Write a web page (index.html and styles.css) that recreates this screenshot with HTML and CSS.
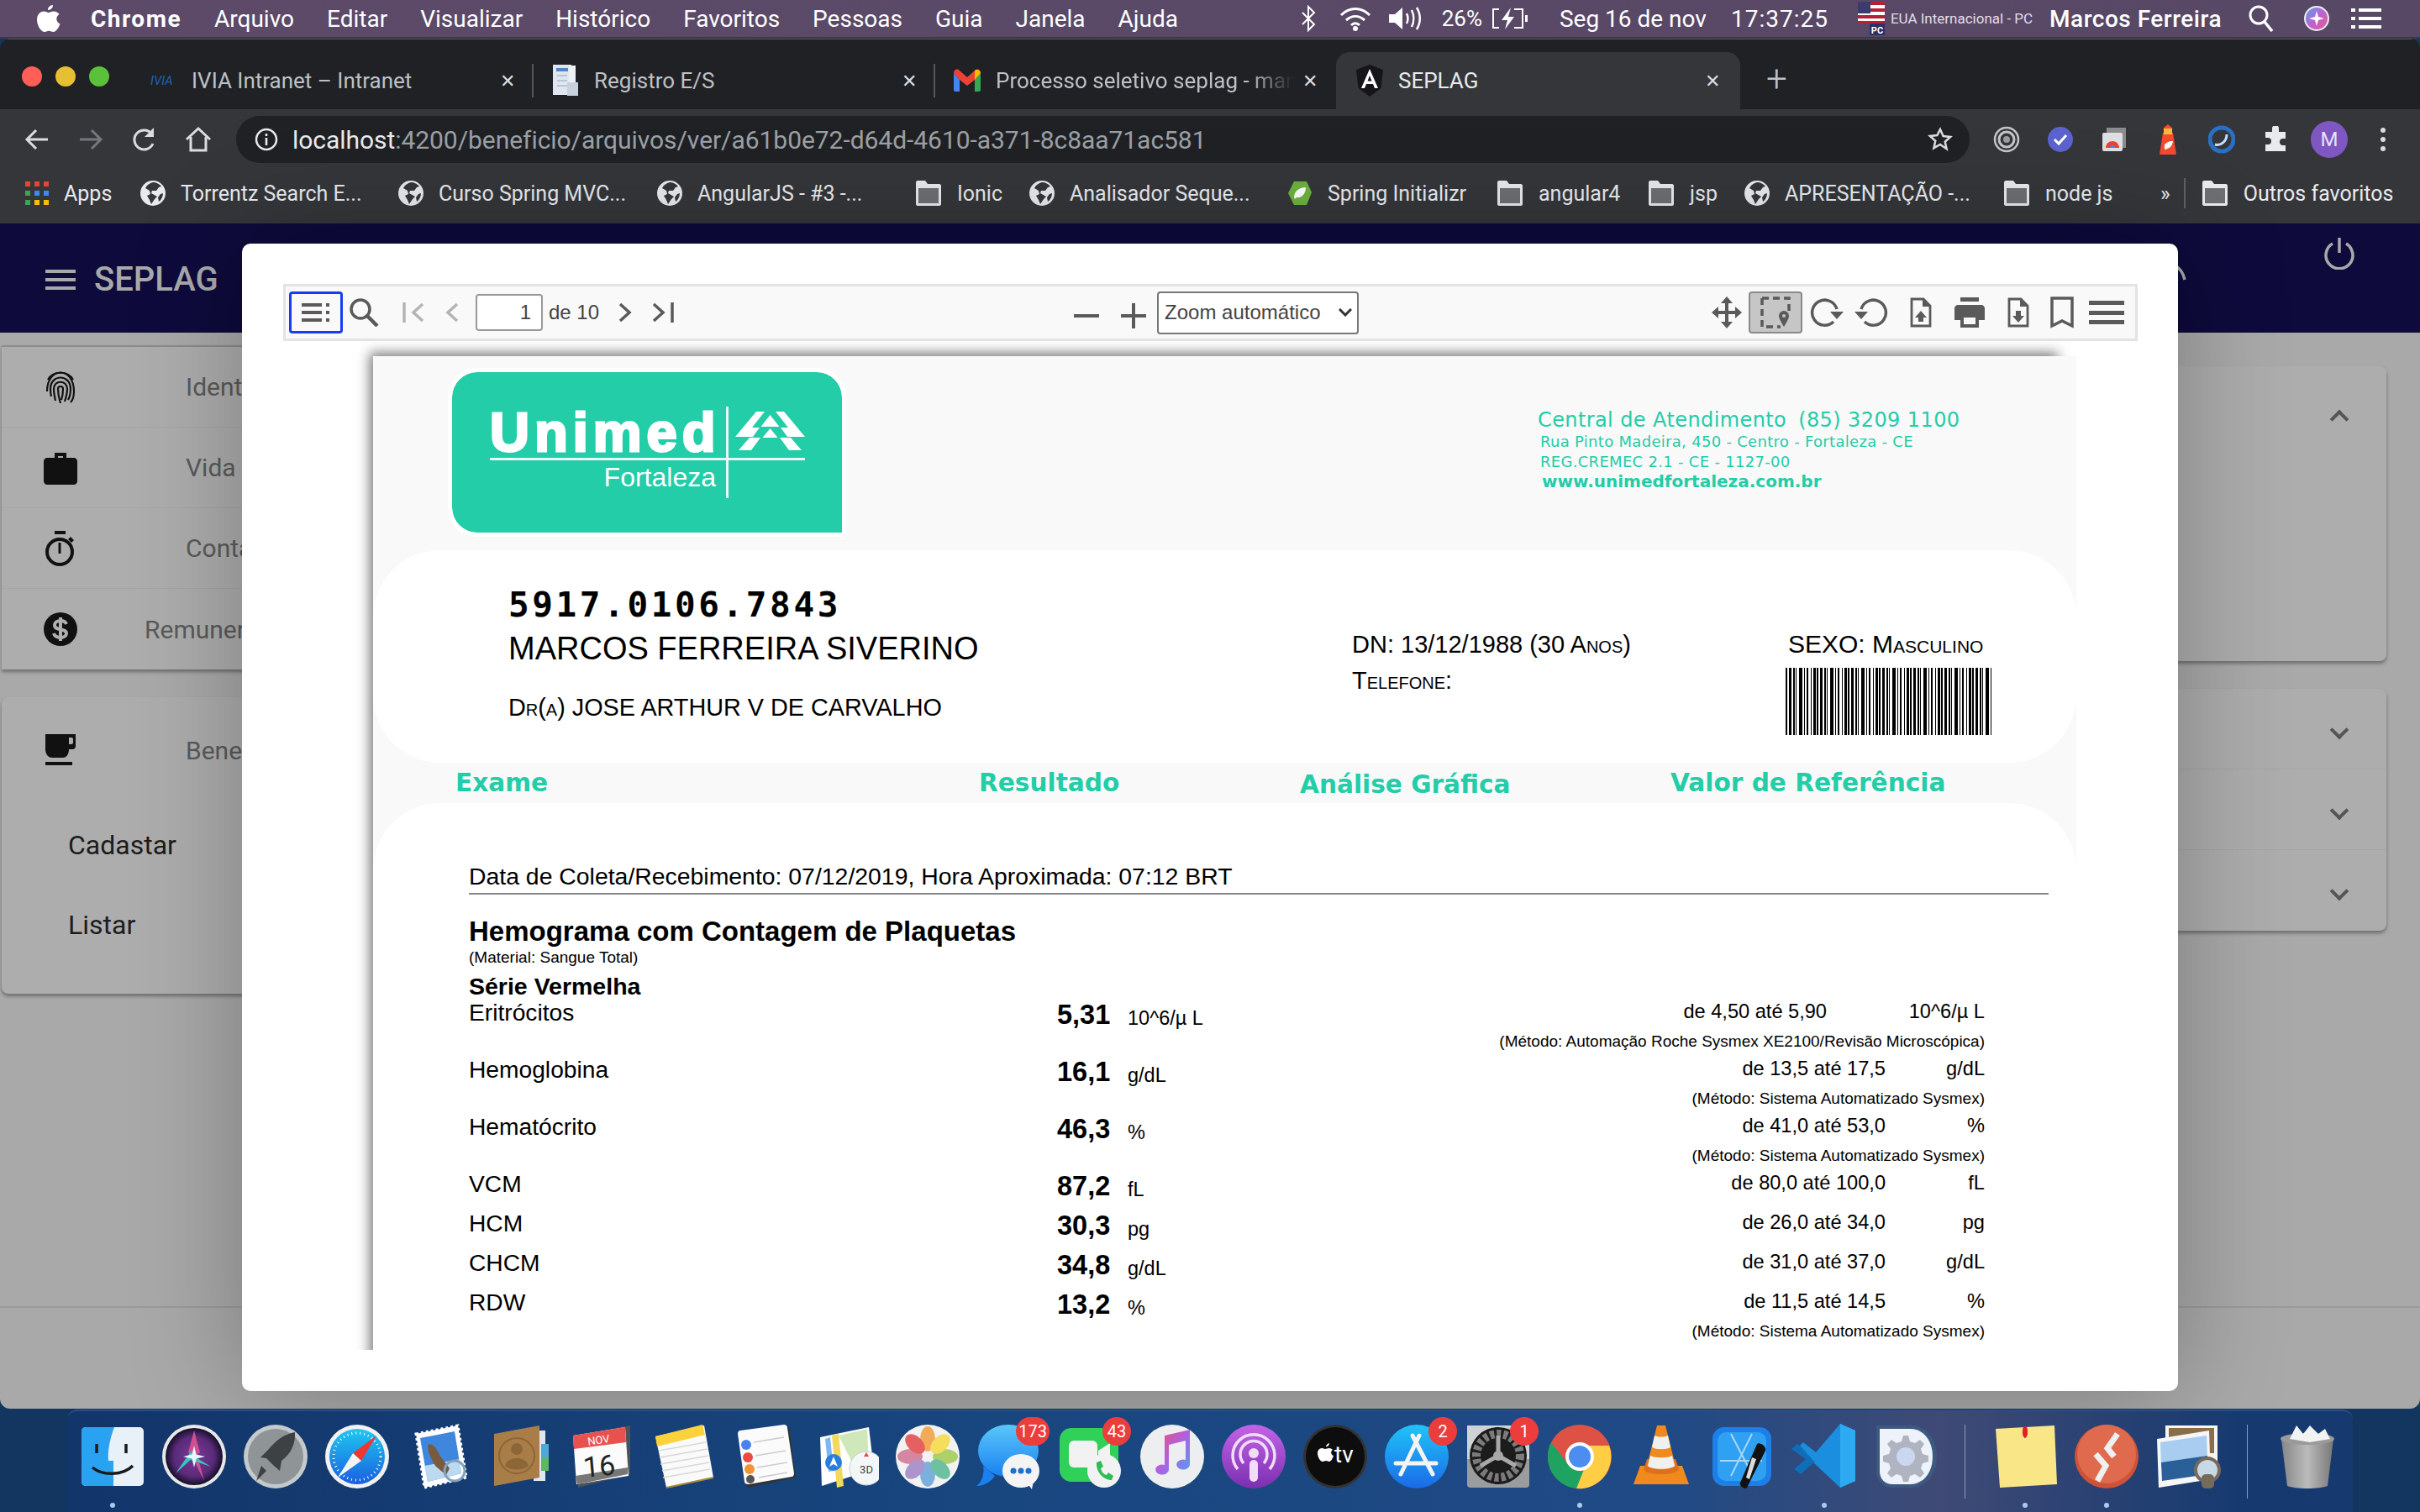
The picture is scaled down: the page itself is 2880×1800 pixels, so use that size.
FILE: index.html
```html
<!DOCTYPE html>
<html lang="pt-BR">
<head>
    <meta charset="UTF-8">
    <title>SEPLAG</title>
    <link rel="stylesheet" href="styles.css">
</head>
<body>

<!-- barra do mac -->
<div class="menubar">
    <svg class="apple" width="28" height="34" viewBox="0 0 28 34"><path fill="#fff" d="M19 1c.2 3-2.600 6.200-6 6-.4-3 2.800-6 6-6zM20 8.500c2.500 0 5 1.200 6.500 3.500-4.800 3-3.800 9.600 1 11.500-1.500 4-4.500 9.500-8 9.500-2 0-3-1.300-5.300-1.300S11 33 9 33C5 33 0 25.500 0 18.500 0 11.800 4.300 8.500 8.300 8.500c2.400 0 4 1.500 5.500 1.500 1.400 0 3.400-1.500 6.200-1.500z"/></svg>
    <span class="menu-item menu-app">Chrome</span>
    <span class="menu-item">Arquivo</span>
    <span class="menu-item">Editar</span>
    <span class="menu-item">Visualizar</span>
    <span class="menu-item">Histórico</span>
    <span class="menu-item">Favoritos</span>
    <span class="menu-item">Pessoas</span>
    <span class="menu-item">Guia</span>
    <span class="menu-item">Janela</span>
    <span class="menu-item">Ajuda</span>

    <div class="status">
        <svg class="st-bt" width="18" height="32" viewBox="0 0 18 32"><path fill="none" stroke="#fff" stroke-width="2" d="M2 9l14 14-7 7V2l7 7L2 23"/></svg>
        <svg class="st-wifi" width="38" height="30" viewBox="0 0 38 30"><g fill="none" stroke="#fff" stroke-width="3"><path d="M2 11c10-10 24-10 34 0"/><path d="M8 17c7-6 15-6 22 0"/><path d="M14 23c3-3 7-3 10 0"/></g><circle cx="19" cy="27" r="3" fill="#fff"/></svg>
        <svg class="st-vol" width="44" height="30" viewBox="0 0 44 30"><path fill="#fff" d="M1 10h7l9-8v26l-9-8H1z"/><g fill="none" stroke="#fff" stroke-width="2.500"><path d="M22 9c2 4 2 8 0 12"/><path d="M28 5c3 6 3 14 0 20"/><path d="M34 2c5 8 5 18 0 26"/></g></svg>
        <span class="st-pct">26%</span>
        <svg class="st-bat" width="44" height="28" viewBox="0 0 44 28"><path fill="none" stroke="#fff" stroke-width="2" d="M10 3H3v22h7M28 3h10v22H28"/><rect x="41" y="10" width="3" height="8" fill="#fff"/><path fill="#fff" d="M24 1L13 16h7l-3 11 11-15h-7z"/></svg>
        <span class="st-date">Seg 16 de nov</span>
        <span class="st-time">17:37:25</span>
        <svg class="st-flag" width="32" height="40" viewBox="0 0 32 40"><rect y="0" width="32" height="26" fill="#fff"/><path fill="#b22234" d="M0 0h32v4H0zM0 8h32v4H0zM0 16h32v4H0zM0 23h32v3H0z"/><rect width="15" height="14" fill="#3c3b6e"/><rect x="14" y="26" width="18" height="14" fill="#2d3068"/><text x="16" y="38" class="flag-pc">PC</text></svg>
        <span class="st-layout">EUA Internacional - PC</span>
        <span class="st-user">Marcos Ferreira</span>
        <svg class="st-search" width="30" height="32" viewBox="0 0 30 32"><circle cx="12" cy="12" r="10" fill="none" stroke="#fff" stroke-width="3"/><path stroke="#fff" stroke-width="3.500" d="M19 20l9 11"/></svg>
        <svg class="st-siri" width="30" height="30" viewBox="0 0 30 30"><defs><linearGradient id="siriMini" x1="0" y1="0" x2="1" y2="1"><stop offset="0" stop-color="#4aa8f0"/><stop offset=".5" stop-color="#c060d0"/><stop offset="1" stop-color="#e85a90"/></linearGradient></defs><circle cx="15" cy="15" r="14" fill="url(#siriMini)" stroke="#eee" stroke-width="2"/><path fill="#fff" d="M15 6l2 7 7 2-7 2-2 7-2-7-7-2 7-2z"/></svg>
        <svg class="st-list" width="36" height="24" viewBox="0 0 36 24"><path fill="#fff" d="M0 0h5v4H0zM9 0h27v4H9zM0 10h5v4H0zM9 10h27v4H9zM0 20h5v4H0zM9 20h27v4H9z"/></svg>
    </div>
</div>

<div class="window">
    <!-- abas -->
    <div class="tabstrip">
        <div class="lights"><i class="light red"></i><i class="light yellow"></i><i class="light green"></i></div>
        <div class="tab">
            <span class="fav-ivia">IVIA</span>
            <span class="tab-title">IVIA Intranet – Intranet</span>
            <span class="tab-close">✕</span>
        </div>
        <div class="tab">
            <svg class="fav" width="32" height="40" viewBox="0 0 32 40"><rect x="1" y="1" width="22" height="36" fill="#dfe6ef"/><rect x="5" y="5" width="14" height="4" fill="#4c87bf"/><path fill="#eef2f6" d="M20 2h8v36H20z"/><path fill="#b8c6d6" d="M6 13h12v2H6zM6 19h12v2H6zM6 25h12v2H6z"/><rect x="18" y="22" width="13" height="16" fill="#c8d2de"/></svg>
            <span class="tab-title">Registro E/S</span>
            <span class="tab-close">✕</span>
        </div>
        <div class="tab tab-last">
            <svg class="fav" width="32" height="28" viewBox="0 0 32 28"><path fill="#4285f4" d="M0 5v20c0 1 1 2 2 2h5V13z"/><path fill="#34a853" d="M25 13v14h5c1 0 2-1 2-2V5z"/><path fill="#ea4335" d="M7 13L0 5c0-4 4-6 7-3l9 8 9-8c3-3 7-1 7 3l-7 8-9 7z"/><path fill="#fbbc04" d="M25 2c2-2 7-1 7 3l-7 8z"/></svg>
            <span class="tab-title tab-fade">Processo seletivo seplag - mar</span>
            <span class="tab-close">✕</span>
        </div>
        <div class="tab tab-active">
            <svg class="fav" width="32" height="38" viewBox="0 0 32 38"><path fill="#15151a" d="M16 0l16 6-2.500 22L16 38 2.500 28 0 6z"/><path fill="#fff" d="M16 5L6 28h4l2-5h8l2 5h4zM13.500 19.500L16 13l2.500 6.500z"/></svg>
            <span class="tab-title">SEPLAG</span>
            <span class="tab-close">✕</span>
        </div>
        <span class="tab-new">+</span>
    </div>

    <!-- barra de endereco -->
    <div class="toolbar">
        <svg class="nav-ic" width="32" height="32" viewBox="0 0 32 32"><path fill="none" stroke="#dadce0" stroke-width="3" d="M29 16H5M15 5L4 16l11 11"/></svg>
        <svg class="nav-ic" width="32" height="32" viewBox="0 0 32 32"><path fill="none" stroke="#74777b" stroke-width="3" d="M3 16h24M17 5l11 11-11 11"/></svg>
        <svg class="nav-ic" width="32" height="32" viewBox="0 0 32 32"><path fill="none" stroke="#dadce0" stroke-width="3" d="M26 21a11.500 11.500 0 1 1-1-11"/><path fill="#dadce0" d="M27 2v11H16z"/></svg>
        <svg class="nav-ic" width="32" height="32" viewBox="0 0 32 32"><path fill="none" stroke="#dadce0" stroke-width="3" d="M2 16L16 3l14 13M7 13v16h18V13"/></svg>
        <div class="omnibox">
            <svg width="28" height="28" viewBox="0 0 28 28"><circle cx="14" cy="14" r="12" fill="none" stroke="#e8eaed" stroke-width="2.500"/><path fill="#e8eaed" d="M12.700 12h2.600v9h-2.600zM12.700 7h2.600v3h-2.600z"/></svg>
            <span class="url"><b>localhost</b>:4200/beneficio/arquivos/ver/a61b0e72-d64d-4610-a371-8c8aa71ac581</span>
            <svg class="star" width="30" height="30" viewBox="0 0 30 30"><path fill="none" stroke="#dadce0" stroke-width="2.500" d="M15 3l3.600 8 8.600.9-6.500 5.800 1.900 8.500L15 21l-7.600 4.200 1.900-8.500-6.500-5.800 8.600-.9z"/></svg>
        </div>
        <div class="extensions">
            <svg width="32" height="32" viewBox="0 0 32 32"><g fill="none" stroke="#c4c6c9"><circle cx="16" cy="16" r="14" stroke-width="2.500"/><circle cx="16" cy="16" r="9" stroke-width="3"/></g><circle cx="16" cy="16" r="4" fill="#9a9c9f"/></svg>
            <svg width="32" height="32" viewBox="0 0 32 32"><circle cx="16" cy="16" r="15" fill="#5c63cf"/><path fill="none" stroke="#fff" stroke-width="3" d="M9 16l5 5 9-10"/></svg>
            <svg width="32" height="32" viewBox="0 0 32 32"><rect x="7" y="2" width="23" height="24" fill="#8a8c8f"/><rect x="2" y="8" width="24" height="22" rx="2" fill="#dfe0e1"/><path fill="#ea4335" d="M6 26a8 8 0 0 1 16 0z"/><path fill="#4285f4" d="M11 26a3 3 0 0 1 6 0z"/></svg>
            <svg width="32" height="36" viewBox="0 0 32 36"><path fill="#f44b30" d="M10 10h12l4 26H6z"/><rect x="11" y="4" width="10" height="8" fill="#f8b83c"/><path fill="#f44b30" d="M16 0l6 5H10z"/><path fill="#fff" d="M12 24c5-5 10-4 10-4-1 6-4 9-10 10z"/></svg>
            <svg width="32" height="36" viewBox="0 0 32 36"><circle cx="16" cy="18" r="14" fill="none" stroke="#2a6fc4" stroke-width="5"/><path fill="none" stroke="#bfe0ff" stroke-width="3" d="M8 24c6 2 14-3 14-12"/></svg>
            <svg width="32" height="32" viewBox="0 0 32 32"><path fill="#e8eaed" d="M12 3a4 4 0 0 1 8 0v4h8v8h-3a4 4 0 0 0 0 8h3v7H4v-8h3a4 4 0 0 0 0-8H4V7h8z"/></svg>
            <span class="avatar">M</span>
            <svg class="kebab" width="8" height="32" viewBox="0 0 8 32"><g fill="#dadce0"><circle cx="4" cy="5" r="3"/><circle cx="4" cy="16" r="3"/><circle cx="4" cy="27" r="3"/></g></svg>
        </div>
    </div>

    <!-- favoritos -->
    <div class="bookmarks">
        <span class="bm bm-apps">
            <svg width="28" height="28" viewBox="0 0 28 28"><path fill="#ea4335" d="M0 0h6v6H0zM11 0h6v6h-6zM22 0h6v6h-6z"/><path fill="#4285f4" d="M11 11h6v6h-6zM22 11h6v6h-6z"/><path fill="#34a853" d="M0 11h6v6H0zM0 22h6v6H0z"/><path fill="#fbbc04" d="M11 22h6v6h-6zM22 22h6v6h-6z"/></svg>
            Apps
        </span>
        <span class="bm w-torrentz"><svg class="globe"><use href="#globe"/></svg>Torrentz Search E...</span>
        <span class="bm w-curso"><svg class="globe"><use href="#globe"/></svg>Curso Spring MVC...</span>
        <span class="bm w-angular"><svg class="globe"><use href="#globe"/></svg>AngularJS - #3 -...</span>
        <span class="bm w-ionic"><svg class="folder"><use href="#folder"/></svg>Ionic</span>
        <span class="bm w-analisador"><svg class="globe"><use href="#globe"/></svg>Analisador Seque...</span>
        <span class="bm w-spring"><svg class="globe" viewBox="0 0 30 30"><path fill="#6db33f" d="M8 1h15l6 13-6 15H8L1 15z"/><path fill="#fff" d="M8 20c0-8 7-12 14-12 0 8-5 13-11 12l-2 2z"/></svg>Spring Initializr</span>
        <span class="bm w-angular4"><svg class="folder"><use href="#folder"/></svg>angular4</span>
        <span class="bm w-jsp"><svg class="folder"><use href="#folder"/></svg>jsp</span>
        <span class="bm w-apres"><svg class="globe"><use href="#globe"/></svg>APRESENTAÇÃO -...</span>
        <span class="bm w-node"><svg class="folder"><use href="#folder"/></svg>node js</span>
        <span class="bm-more">»</span>
        <span class="bm-sep"></span>
        <span class="bm"><svg class="folder"><use href="#folder"/></svg>Outros favoritos</span>
    </div>

    <svg class="sprites" width="0" height="0">
        <symbol id="globe" viewBox="0 0 30 30"><circle cx="15" cy="15" r="15" fill="#e8eaed"/><path fill="#35363a" d="M15 2c-4 1-7 3-9 7l5 3 1 4-4 2 3 5 2 5 4-6 3-3-7-4 1-3 5 0 3-4 3-1c-2-3-6-5-10-5zM24 16l-3 4 1 5c3-2 5-6 5-10z"/></symbol>
        <symbol id="folder" viewBox="0 0 32 30"><path fill="#e8eaed" d="M1 2c0-1 1-2 2-2h9l3 4h14c1 0 2 1 2 2v22c0 1-1 2-2 2H3c-1 0-2-1-2-2z"/><rect x="4" y="9" width="24" height="18" fill="#6e6f72"/></symbol>
    </svg>

    <!-- aplicacao por tras do modal -->
    <div class="app">
        <header class="app-header">
            <svg class="burger" width="36" height="24" viewBox="0 0 36 24"><path fill="#a9a9a9" d="M0 0h36v4H0zM0 10h36v4H0zM0 20h36v4H0z"/></svg>
            <span class="brand">SEPLAG</span>
            <svg class="acct" width="50" height="40" viewBox="0 0 50 40"><path fill="none" stroke="#a9a9a9" stroke-width="3.500" d="M10 4c14-3 26 1 30 18"/></svg>
            <svg class="power" width="36" height="40" viewBox="0 0 36 40"><path fill="none" stroke="#a9a9a9" stroke-width="3.500" d="M10 9a16 16 0 1 0 16 0M18 2v18"/></svg>
        </header>
        <div class="app-body">
            <nav class="sidenav">
                <div class="nav-card">
                    <div class="nav-row">
                        <svg class="nav-icon" width="36" height="42" viewBox="0 0 36 42"><g fill="none" stroke="#111" stroke-width="2.200"><path d="M3 12c6-11 24-11 30 0"/><path d="M2 26c0-30 32-30 32 0 0 6-1 10-4 13"/><path d="M7 32c-1-4-1-7-1-9 0-18 24-18 24 0 0 6-1 10-3 13"/><path d="M12 37c-1-5-2-9-2-14 0-11 16-11 16 0 0 5-1 9-3 15"/><path d="M18 40c-2-6-3-12-3-17 0-4 6-4 6 0 0 6-1 10-2 13"/></g></svg>
                        <span class="nav-label">Identificação</span>
                    </div>
                    <div class="nav-row">
                        <svg class="nav-icon" width="40" height="40" viewBox="0 0 40 40"><path fill="#111" d="M13 8V2h14v6h9c2 0 4 2 4 4v24c0 2-2 4-4 4H4c-2 0-4-2-4-4V12c0-2 2-4 4-4zm4-2v2h6V6z"/></svg>
                        <span class="nav-label">Vida funcional</span>
                    </div>
                    <div class="nav-row">
                        <svg class="nav-icon" width="38" height="42" viewBox="0 0 38 42"><circle cx="18" cy="25" r="15" fill="none" stroke="#111" stroke-width="4"/><path fill="#111" d="M12 0h13v4H12zM16.500 14h3v13h-3zM31 7l4 4-3 3-4-4z"/></svg>
                        <span class="nav-label">Contato</span>
                    </div>
                    <div class="nav-row">
                        <svg class="nav-icon" width="40" height="40" viewBox="0 0 40 40"><circle cx="20" cy="20" r="20" fill="#111"/><path fill="none" stroke="#b0b0b0" stroke-width="4" d="M27 14c-1-3-4-4-7-4-4 0-7 2-7 5 0 8 14 3 14 10 0 3-3 5-7 5-3 0-7-1-8-5M20 6v28"/></svg>
                        <span class="nav-label nav-label-long">Remuneração</span>
                    </div>
                </div>
                <div class="nav-card nav-card-open">
                    <div class="nav-row">
                        <svg class="nav-icon" width="36" height="38" viewBox="0 0 36 38"><path fill="#111" d="M0 0h36v14a4 4 0 0 1-4 4h-4c0 6-3 10-7 10H8c-5 0-8-5-8-10zM28 4v8h3a2 2 0 0 0 2-2V6a2 2 0 0 0-2-2zM0 33h32v4H0z"/></svg>
                        <span class="nav-label">Benefícios</span>
                    </div>
                    <a class="nav-sub">Cadastar</a>
                    <a class="nav-sub">Listar</a>
                </div>
            </nav>
            <section class="panels">
                <div class="panel panel-open"><i class="chev chev-up"></i></div>
                <div class="panel-group">
                    <div class="panel-line"><i class="chev"></i></div>
                    <div class="panel-line"><i class="chev"></i></div>
                    <div class="panel-line"><i class="chev"></i></div>
                </div>
            </section>
        </div>
        <div class="app-footer"></div>

        <!-- modal com o visualizador pdf -->
        <div class="modal">
            <div class="viewer-bar">
                <button class="pdf-btn pdf-toggle">
                    <svg width="34" height="22" viewBox="0 0 34 22"><path fill="#5a5a5a" d="M0 0h24v4H0zM0 9h24v4H0zM0 18h24v4H0zM29 0h4v4h-4zM29 9h4v4h-4zM29 18h4v4h-4z"/></svg>
                </button>
                <svg class="pdf-search" width="36" height="34" viewBox="0 0 36 34"><circle cx="14" cy="13" r="11" fill="none" stroke="#5a5a5a" stroke-width="3.500"/><path stroke="#5a5a5a" stroke-width="4.500" d="M22 21l12 12"/></svg>
                <svg class="pdf-first" width="26" height="24" viewBox="0 0 26 24"><path fill="none" stroke="#b4b4b4" stroke-width="3.500" d="M2 0v24M24 2L13 12l11 10"/></svg>
                <svg class="pdf-prev" width="16" height="24" viewBox="0 0 16 24"><path fill="none" stroke="#b4b4b4" stroke-width="3.500" d="M14 2L3 12l11 10"/></svg>
                <input class="pdf-page" value="1">
                <span class="pdf-of">de 10</span>
                <svg class="pdf-next" width="16" height="24" viewBox="0 0 16 24"><path fill="none" stroke="#5a5a5a" stroke-width="3.500" d="M2 2l11 10L2 22"/></svg>
                <svg class="pdf-last" width="26" height="24" viewBox="0 0 26 24"><path fill="none" stroke="#5a5a5a" stroke-width="3.500" d="M2 2l11 10L2 22M24 0v24"/></svg>
                <svg class="pdf-minus" width="30" height="4" viewBox="0 0 30 4"><rect width="30" height="4" fill="#5a5a5a"/></svg>
                <svg class="pdf-plus" width="30" height="30" viewBox="0 0 30 30"><path fill="#5a5a5a" d="M0 13h30v4H0zM13 0h4v30h-4z"/></svg>
                <span class="pdf-zoom">Zoom automático<svg width="16" height="10" viewBox="0 0 16 10"><path fill="none" stroke="#333" stroke-width="3" d="M1 1l7 7 7-7"/></svg></span>
                <svg class="pdf-move" width="36" height="38" viewBox="0 0 36 38"><path fill="#5a5a5a" d="M18 0l7 8h-5v9h8v-5l8 7-8 7v-5h-8v9h5l-7 8-7-8h5v-9H8v5l-8-7 8-7v5h8V8h-5z"/></svg>
                <button class="pdf-btn pdf-select">
                    <svg width="36" height="38" viewBox="0 0 36 38"><path fill="none" stroke="#5a5a5a" stroke-width="3.500" stroke-dasharray="8 5" d="M2 2h32v16M2 2v34h22"/><path fill="#5a5a5a" d="M28 17a6 6 0 0 1 6 6c0 4-6 13-6 13s-6-9-6-13a6 6 0 0 1 6-6z"/><circle cx="28" cy="23" r="2" fill="#c6c6c6"/></svg>
                </button>
                <svg class="pdf-rot" width="40" height="36" viewBox="0 0 40 36"><path fill="none" stroke="#5a5a5a" stroke-width="3.500" d="M32 14A15 15 0 1 0 28 29"/><path fill="#5a5a5a" d="M24 17h16l-8 9z"/></svg>
                <svg class="pdf-rotb" width="40" height="36" viewBox="0 0 40 36"><path fill="none" stroke="#5a5a5a" stroke-width="3.500" d="M8 14A15 15 0 1 1 12 29"/><path fill="#5a5a5a" d="M0 17h16l-8 9z"/></svg>
                <svg class="pdf-open" width="26" height="36" viewBox="0 0 26 36"><path fill="none" stroke="#5a5a5a" stroke-width="2.800" d="M2 2h14l8 8v24H2z"/><path fill="#5a5a5a" d="M15 2l9 9h-9zM13 16l7 8h-4v5h-6v-5H6z"/></svg>
                <svg class="pdf-print" width="36" height="36" viewBox="0 0 36 36"><path fill="#5a5a5a" d="M7 0h22v5H7zM4 9h28c2 0 4 2 4 4v14h-7v9H7v-9H0V13c0-2 2-4 4-4zm7 15v8h14v-8z"/></svg>
                <svg class="pdf-save" width="26" height="36" viewBox="0 0 26 36"><path fill="none" stroke="#5a5a5a" stroke-width="2.800" d="M2 2h14l8 8v24H2z"/><path fill="#5a5a5a" d="M15 2l9 9h-9zM10 16h6v6h4l-7 8-7-8h4z"/></svg>
                <svg class="pdf-mark" width="28" height="38" viewBox="0 0 28 38"><path fill="none" stroke="#5a5a5a" stroke-width="3.500" d="M2 2h24v33l-12-6-12 6z"/></svg>
                <svg class="pdf-more" width="42" height="28" viewBox="0 0 42 28"><path fill="#5a5a5a" d="M0 0h42v5H0zM0 12h42v5H0zM0 23h42v5H0z"/></svg>
            </div>

            <div class="viewer">
                <div class="sheet">
                    <div class="scan">
                        <div class="lab-head">
                            <div class="logo">
                                <div class="logo-top">
                                    <span class="logo-name">Unimed</span>
                                    <svg class="logo-mark" width="83" height="46" viewBox="0 0 83 46"><g fill="#fff"><path d="M0 30L25 0h10L20 19h9l-8 11z"/><path d="M83 30L58 0H48l15 19h-9l8 11z"/><path d="M41.500 4l11 14h-22zM4 46l13-15h13L19 46zM79 46L66 31H53l11 15z"/><path d="M41.500 20l9 11h-18z"/></g></svg>
                                </div>
                                <div class="logo-city">Fortaleza</div>
                                <i class="logo-vline"></i>
                            </div>
                            <div class="lab-contact">
                                <div class="contact-main"><span>Central de Atendimento</span><span class="contact-phone">(85) 3209 1100</span></div>
                                <div class="contact-small">Rua Pinto Madeira, 450 - Centro - Fortaleza - CE</div>
                                <div class="contact-small">REG.CREMEC 2.1 - CE - 1127-00</div>
                                <div class="contact-web">www.unimedfortaleza.com.br</div>
                            </div>
                        </div>

                        <div class="patient">
                            <div class="patient-main">
                                <div class="patient-code">5917.0106.7843</div>
                                <div class="patient-name">MARCOS FERREIRA SIVERINO</div>
                                <div class="patient-doctor">Dr(a) JOSE ARTHUR V DE CARVALHO</div>
                            </div>
                            <div class="patient-info">
                                <div>DN: 13/12/1988 (30 Anos)</div>
                                <div class="patient-phone">Telefone:</div>
                            </div>
                            <div class="patient-sex">
                                <div>SEXO: Masculino</div>
                                <div class="barcode"></div>
                            </div>
                        </div>

                        <div class="col-heads">
                            <span class="col-exam">Exame</span>
                            <span class="col-result">Resultado</span>
                            <span class="col-graph">Análise Gráfica</span>
                            <span class="col-ref">Valor de Referência</span>
                        </div>

                        <div class="results">
                            <div class="collect">Data de Coleta/Recebimento: 07/12/2019, Hora Aproximada: 07:12 BRT</div>
                            <h3 class="exam-title">Hemograma com Contagem de Plaquetas</h3>
                            <div class="exam-material">(Material: Sangue Total)</div>
                            <div class="exam-group">Série Vermelha</div>

                            <div class="exam-row exam-first">
                                <span>Eritrócitos</span><b>5,31</b><small>10^6/µ L</small>
                                <span class="ref">de 4,50 até 5,90</span><span class="ref-unit">10^6/µ L</span>
                                <em>(Método: Automação Roche Sysmex XE2100/Revisão Microscópica)</em>
                            </div>
                            <div class="exam-row">
                                <span>Hemoglobina</span><b>16,1</b><small>g/dL</small>
                                <span class="ref">de 13,5 até 17,5</span><span class="ref-unit">g/dL</span>
                                <em>(Método: Sistema Automatizado Sysmex)</em>
                            </div>
                            <div class="exam-row">
                                <span>Hematócrito</span><b>46,3</b><small>%</small>
                                <span class="ref">de 41,0 até 53,0</span><span class="ref-unit">%</span>
                                <em>(Método: Sistema Automatizado Sysmex)</em>
                            </div>
                            <div class="exam-row">
                                <span>VCM</span><b>87,2</b><small>fL</small>
                                <span class="ref">de 80,0 até 100,0</span><span class="ref-unit">fL</span>
                            </div>
                            <div class="exam-row">
                                <span>HCM</span><b>30,3</b><small>pg</small>
                                <span class="ref">de 26,0 até 34,0</span><span class="ref-unit">pg</span>
                            </div>
                            <div class="exam-row">
                                <span>CHCM</span><b>34,8</b><small>g/dL</small>
                                <span class="ref">de 31,0 até 37,0</span><span class="ref-unit">g/dL</span>
                            </div>
                            <div class="exam-row">
                                <span>RDW</span><b>13,2</b><small>%</small>
                                <span class="ref">de 11,5 até 14,5</span><span class="ref-unit">%</span>
                                <em>(Método: Sistema Automatizado Sysmex)</em>
                            </div>
                        </div>
                    </div>
                </div>
            </div>
        </div>
    </div>
</div>

<!-- dock -->
<div class="dock">
    <div class="dock-item has-dot">
        <svg viewBox="0 0 78 78"><rect x="2" y="4" width="74" height="70" rx="5" fill="#e8f1f8"/><path fill="#2aa2f2" d="M7 4h34c-6 16-8 30-7 40h6v30H7a5 5 0 0 1-5-5V9a5 5 0 0 1 5-5z"/><g stroke="#1b1b1b" stroke-width="3.500" fill="none"><path d="M20 24v11M55 24v11"/><path d="M15 52c12 10 36 10 48-2"/></g></svg>
    </div>
    <div class="dock-item">
        <svg viewBox="0 0 78 78"><defs><radialGradient id="siriBg"><stop offset="0" stop-color="#7a3a9a"/><stop offset=".7" stop-color="#5a2a78"/><stop offset="1" stop-color="#14102a"/></radialGradient></defs><circle cx="39" cy="39" r="38" fill="#e8e8e8"/><circle cx="39" cy="39" r="34" fill="url(#siriBg)"/><path fill="#d0508e" d="M39 8l7 26-7 5-7-5zM44 42l7 26-12-24z"/><path fill="#38c8c0" d="M39 39l-22 20 18-26zM39 39l20 12-24-8z"/><path fill="#e4f9ff" d="M39 26l2.500 10.500L52 39l-10.500 2.500L39 52l-2.500-10.500L26 39l10.500-2.500z"/></svg>
    </div>
    <div class="dock-item">
        <svg viewBox="0 0 78 78"><circle cx="39" cy="39" r="38" fill="#c4cacb"/><circle cx="39" cy="39" r="33" fill="#8f9496"/><path fill="#3e4143" d="M62 10c1 14-5 26-16 34l-2 12-7-6-9-9-7-1 9-9c10-12 20-19 32-21zM22 50l6 6-12 12z"/></svg>
    </div>
    <div class="dock-item">
        <svg viewBox="0 0 78 78"><defs><linearGradient id="safBg" x1="0" y1="0" x2="0" y2="1"><stop offset="0" stop-color="#1ec8f0"/><stop offset="1" stop-color="#1a5fe0"/></linearGradient></defs><circle cx="39" cy="39" r="38" fill="#f2f2f2"/><circle cx="39" cy="39" r="33" fill="url(#safBg)"/><circle cx="39" cy="39" r="28" fill="none" stroke="#fff" stroke-width="3" stroke-dasharray="1 4"/><path fill="#f0372e" d="M62 14L34 35l10 9z"/><path fill="#f4f4f4" d="M16 64l28-20-10-9z"/></svg>
    </div>
    <div class="dock-item">
        <svg viewBox="0 0 78 78"><path fill="#fff" stroke="#fff" stroke-width="3" stroke-dasharray="3 3" d="M12 12l50-10 10 62-50 12z"/><path fill="#3f87dd" d="M17 17l41-8 8 50-40 10z"/><path fill="#bcd9f2" d="M22 50l42-8 2 17-40 10z"/><path fill="#7a5a3e" d="M26 25c6-2 10 3 14 12l12 16-4 8-12-10c-6-8-10-18-10-26z"/><circle cx="58" cy="56" r="12" fill="none" stroke="#85a0bd" stroke-width="3"/></svg>
    </div>
    <div class="dock-item">
        <svg viewBox="0 0 78 78"><rect x="55" y="8" width="14" height="60" fill="#dfe6ee"/><rect x="64" y="24" width="9" height="16" fill="#4fa8d8"/><rect x="64" y="40" width="9" height="16" fill="#5cb865"/><path fill="#a97d47" d="M8 12L62 2v62L8 74z"/><circle cx="35" cy="38" r="21" fill="none" stroke="#8c6636" stroke-width="2"/><circle cx="35" cy="30" r="7" fill="#8c6636"/><path fill="#8c6636" d="M21 50c3-12 25-12 28 0-7 6-21 6-28 0z"/></svg>
    </div>
    <div class="dock-item">
        <svg viewBox="0 0 78 78"><path fill="#4b5259" d="M7 14l66-12v58L11 76z"/><path fill="#fbfbfb" d="M5 14l62-10 4 58-62 10z"/><path fill="#e8514e" d="M5 14l62-10 1 18L6 30z"/><path fill="#777" d="M8 62l62-10v8L10 72z"/><text x="36" y="24" class="cal-month" transform="rotate(-8 36 24)">NOV</text><text x="37" y="62" class="cal-day" transform="rotate(-5 37 62)">16</text></svg>
    </div>
    <div class="dock-item">
        <svg viewBox="0 0 78 78"><path fill="#fafafa" d="M6 15L64 2l11 62-56 12z"/><path fill="#fbd13c" d="M6 15L62 1l3 12L8 27z"/><g stroke="#d8d8d8" stroke-width="1.500"><path d="M10 32l56-10M11 40l57-10M12 48l57-10M14 56l56-10M15 64l56-10"/></g><path stroke="#a58a3a" stroke-width="2" d="M19 76l56-12"/></svg>
    </div>
    <div class="dock-item">
        <svg viewBox="0 0 78 78"><path fill="#333" d="M12 12l56-8 8 60-58 12z"/><path fill="#fbfbfb" d="M10 8L62 1c2 0 4 1 4 4l8 54c0 2-1 4-3 4L20 72c-3 0-5-1-5-3L7 12c0-2 1-4 3-4z"/><circle cx="17" cy="25" r="6" fill="#4a80f0"/><circle cx="19" cy="40" r="6" fill="#ec4b43"/><circle cx="21" cy="54" r="6" fill="#f09535"/><circle cx="22" cy="66" r="5" fill="#555"/><g stroke="#ccc" stroke-width="1.500"><path d="M26 22l36-6M28 38l36-6M30 52l36-6M32 64l34-6"/></g></svg>
    </div>
    <div class="dock-item">
        <svg viewBox="0 0 78 78"><path fill="#fff" d="M8 16l58-12 6 50-62 20z"/><path fill="#cfe8b9" d="M30 14l34-8 2 44-20-4z"/><path fill="#f4d85a" d="M22 14l8-2 6 62-8 2z"/><path fill="#7fb8ee" d="M14 18l6-2 4 40-6 1z"/><circle cx="24" cy="46" r="10" fill="#2a7de0"/><path fill="#fff" d="M24 39l5 12-5-3-5 3z"/><circle cx="63" cy="53" r="20" fill="#f4f7f8" stroke="#c7ced2"/><text x="63" y="59" class="maps-3d">3D</text><path fill="#e8483f" d="M63 34l3 5h-6z"/></svg>
    </div>
    <div class="dock-item">
        <svg viewBox="0 0 78 78"><circle cx="39" cy="39" r="38" fill="#f2f2f2"/><g opacity=".8"><ellipse cx="39" cy="18" rx="9" ry="15" fill="#f39b33"/><ellipse cx="39" cy="60" rx="9" ry="15" fill="#5e9fd8"/><ellipse cx="18" cy="39" rx="15" ry="9" fill="#cf6d8f"/><ellipse cx="60" cy="39" rx="15" ry="9" fill="#9ec84a"/><ellipse cx="24" cy="24" rx="14" ry="9" fill="#e33d3d" transform="rotate(45 24 24)"/><ellipse cx="54" cy="24" rx="14" ry="9" fill="#f6d83a" transform="rotate(-45 54 24)"/><ellipse cx="24" cy="54" rx="14" ry="9" fill="#9b7fc4" transform="rotate(-45 24 54)"/><ellipse cx="54" cy="54" rx="14" ry="9" fill="#4cb58d" transform="rotate(45 54 54)"/></g></svg>
    </div>
    <div class="dock-item">
        <svg viewBox="0 0 78 78"><defs><linearGradient id="msgBg" x1="0" y1="0" x2="0" y2="1"><stop offset="0" stop-color="#5ac8fa"/><stop offset="1" stop-color="#1a80f0"/></linearGradient></defs><ellipse cx="38" cy="32" rx="36" ry="31" fill="url(#msgBg)"/><path fill="#1a80f0" d="M8 50c2 10-2 20-8 24 10 0 18-6 22-12z"/><ellipse cx="53" cy="56" rx="22" ry="20" fill="#f4f4f4"/><path fill="#f4f4f4" d="M60 70l6 8 2-10z"/><g fill="#1a6fd0"><circle cx="44" cy="56" r="3.500"/><circle cx="53" cy="56" r="3.500"/><circle cx="62" cy="56" r="3.500"/></g></svg>
        <span class="badge badge-wide">173</span>
    </div>
    <div class="dock-item">
        <svg viewBox="0 0 78 78"><rect x="2" y="5" width="70" height="64" rx="14" fill="#30d158"/><rect x="13" y="20" width="34" height="32" rx="6" fill="#f2f2f2"/><path fill="#f2f2f2" d="M48 32l14-9v26l-14-9z"/><circle cx="55" cy="56" r="20" fill="#f2f2f2"/><path fill="#2ebd55" d="M46 46l5-2 3 7-3 2c1 4 3 7 7 8l2-3 6 4-2 5c-10 0-19-10-18-21z"/></svg>
        <span class="badge">43</span>
    </div>
    <div class="dock-item">
        <svg viewBox="0 0 78 78"><defs><linearGradient id="musBg" x1="0" y1="0" x2="1" y2="1"><stop offset="0" stop-color="#f0506e"/><stop offset=".5" stop-color="#b060e0"/><stop offset="1" stop-color="#50a0f0"/></linearGradient></defs><circle cx="39" cy="39" r="38" fill="#eceef0"/><path fill="url(#musBg)" d="M30 14l30-7v42a8 6 0 1 1-5-6V20l-20 5v30a8 6 0 1 1-5-6z"/></svg>
    </div>
    <div class="dock-item">
        <svg viewBox="0 0 78 78"><defs><linearGradient id="podBg" x1="0" y1="0" x2="0" y2="1"><stop offset="0" stop-color="#c264e8"/><stop offset="1" stop-color="#7c2fb0"/></linearGradient></defs><circle cx="39" cy="39" r="38" fill="url(#podBg)"/><g fill="none" stroke="#f2ddf8" stroke-width="3.500"><path d="M20 54a25 25 0 1 1 38 0"/><path d="M27 47a16 16 0 1 1 24 0"/></g><circle cx="39" cy="35" r="6" fill="#f2ddf8"/><rect x="34" y="43" width="10" height="26" rx="5" fill="#f2ddf8"/></svg>
    </div>
    <div class="dock-item">
        <svg viewBox="0 0 78 78"><circle cx="39" cy="39" r="38" fill="#333"/><circle cx="39" cy="39" r="35" fill="#0d0d0d"/><path fill="#fff" d="M28 27c1-3 3-4 4-4 0 2-2 5-4 4zM32 29c2 0 3 1 4 2-3 2-2 6 1 7-1 3-3 7-5 7-2 0-2-1-4-1s-2 1-4 1c-3 0-6-6-6-10 0-4 3-6 5-6s3 1 4 1 3-1 5-1z"/><text x="38" y="46" class="tv-text">tv</text></svg>
    </div>
    <div class="dock-item">
        <svg viewBox="0 0 78 78"><defs><linearGradient id="appBg" x1="0" y1="0" x2="0" y2="1"><stop offset="0" stop-color="#20c4f8"/><stop offset="1" stop-color="#1a6ae8"/></linearGradient></defs><circle cx="39" cy="39" r="38" fill="url(#appBg)"/><g stroke="#f4f4f4" stroke-width="5" stroke-linecap="round"><path d="M42 14L20 60M34 14l24 46M14 47h48"/></g></svg>
        <span class="badge">2</span>
    </div>
    <div class="dock-item">
        <svg viewBox="0 0 78 78"><rect x="2" y="2" width="74" height="74" rx="4" fill="#9a9c9e"/><rect x="2" y="2" width="74" height="40" fill="#cfd3d6"/><circle cx="39" cy="38" r="34" fill="#1c1c1c"/><circle cx="39" cy="38" r="26" fill="none" stroke="#7b7b7b" stroke-width="10" stroke-dasharray="5 3"/><g stroke="#a8a8a8" stroke-width="5"><path d="M39 38V14M39 38L18 50M39 38l21 12"/></g><circle cx="39" cy="38" r="6" fill="#a8a8a8"/></svg>
        <span class="badge">1</span>
    </div>
    <div class="dock-item has-dot">
        <svg viewBox="0 0 78 78"><circle cx="39" cy="39" r="38" fill="#de5246"/><path fill="#1ea362" d="M5 22a38 38 0 0 0 30 55l14-23-10 3-14-9z"/><path fill="#ffce44" d="M74 26H39l12 11-16 40a38 38 0 0 0 39-51z"/><circle cx="39" cy="39" r="17" fill="#fff"/><circle cx="39" cy="39" r="13" fill="#4d8df0"/></svg>
    </div>
    <div class="dock-item">
        <svg viewBox="0 0 78 78"><path fill="#f08a1d" d="M6 72L14 50h50l8 22z"/><path fill="#dd6f1d" d="M18 54c4 8 38 8 42 0l-4-12H22z"/><path fill="#f08a1d" d="M34 2h10l12 48c-6 6-28 6-34 0z"/><path fill="#f0f0f0" d="M31 14c4 2 12 2 16 0l3 14c-5 3-17 3-22 0zM26 38c6 3 20 3 26 0l3 12c-5 5-27 5-32 0z"/></svg>
    </div>
    <div class="dock-item">
        <svg viewBox="0 0 78 78"><rect x="3" y="4" width="70" height="70" rx="14" fill="#1d7fe8"/><rect x="9" y="10" width="58" height="58" rx="10" fill="#2fa0f2"/><g stroke="#a6d8fb" stroke-width="2"><path d="M25 12l26 50M50 12L25 62M12 44h50"/></g><path fill="#111" d="M56 24c3-3 12 3 10 8L44 76c-2 3-10-2-8-6z"/><path fill="#ddd" d="M50 40l5 2-8 24-4-2z"/></svg>
    </div>
    <div class="dock-item has-dot">
        <svg viewBox="0 0 78 78"><path fill="#0e6fb8" d="M0 30l7-6 22 20-18 16-8-6 14-12z"/><path fill="#1b8ee0" d="M58 0L29 34 14 22l-4 4 18 20-2 0 32 30 18-8V8z"/><path fill="#2cabf2" d="M58 0l18 8v60l-18 8z"/></svg>
    </div>
    <div class="dock-item">
        <svg viewBox="0 0 78 78"><path fill="#3c5a80" d="M4 2h40c20 0 32 16 32 37S64 76 44 76H24C12 76 4 68 4 56z"/><path fill="#eef3fb" d="M8 6h36c16 0 27 14 27 33S60 72 44 72H24C14 72 8 66 8 56z"/><path fill="#b0b3c0" d="M36 14l6 0 2 7 6 2 6-4 5 5-4 6 2 6 7 2v7l-7 2-2 6 4 6-5 5-6-4-6 2-2 7h-6l-2-7-6-2-6 4-5-5 4-6-2-6-7-2v-7l7-2 2-6-4-6 5-5 6 4 6-2z"/><circle cx="39" cy="39" r="11" fill="#cbd7f0"/></svg>
    </div>
    <i class="dock-sep"></i>
    <div class="dock-item has-dot">
        <svg viewBox="0 0 78 78"><path fill="#f8e687" d="M4 6l70-4 3 70-68 4z"/><path fill="#e01f26" d="M39 3c3 0 3 4 3 8 0 3-2 6-3 6s-3-3-3-6c0-4 0-8 3-8z"/></svg>
    </div>
    <div class="dock-item has-dot">
        <svg viewBox="0 0 78 78"><circle cx="39" cy="39" r="38" fill="#cf5238"/><circle cx="39" cy="36" r="35" fill="#e06a4e"/><path fill="none" stroke="#f0f0f0" stroke-width="7" d="M52 12L40 29l8 10M26 36l12 14-10 18"/></svg>
    </div>
    <div class="dock-item">
        <svg viewBox="0 0 78 78"><rect x="12" y="2" width="62" height="50" fill="#f6f6f6"/><rect x="16" y="5" width="54" height="30" fill="#8a6e4a"/><path fill="#f6f6f6" d="M2 18l62-10 2 58-62 10z"/><path fill="#a9cdf0" d="M6 22l55-8 1 28-55 10z"/><path fill="#2a5f98" d="M7 46l55-8 1 22-55 8z"/><circle cx="62" cy="55" r="14" fill="#c8d8e4" stroke="#776a5a" stroke-width="4"/><rect x="55" y="60" width="15" height="17" rx="5" fill="#766a5a"/></svg>
    </div>
    <i class="dock-sep"></i>
    <div class="dock-item">
        <svg viewBox="0 0 78 78"><defs><linearGradient id="binBg" x1="0" y1="0" x2="1" y2="0"><stop offset="0" stop-color="#868686"/><stop offset=".5" stop-color="#bbb"/><stop offset="1" stop-color="#777"/></linearGradient></defs><path fill="url(#binBg)" d="M8 18h62l-7 56c-10 4-38 4-48 0z"/><ellipse cx="39" cy="18" rx="32" ry="7" fill="#9a9a9a"/><path fill="#f2f2f2" d="M18 18l8-16 8 10 8-10 10 10 8-6 6 12-24 4z"/></svg>
    </div>
</div>

</body>
</html>
```

FILE: styles.css
```css
* {
    box-sizing: border-box;
}

html, body {
    margin: 0;
    height: 1800px;
    overflow: hidden;
}

body {
    width: 2880px;
    background-color: #12365f;
    font-family: Roboto, "Liberation Sans", sans-serif;
    display: flex;
    flex-direction: column;
}

/* barra do mac */
.menubar {
    height: 46px;
    flex: none;
    background: linear-gradient(90deg, #5c4a68, #574866);
    color: #fff;
    display: flex;
    align-items: center;
    font-size: 28px;
    padding-left: 44px;
    padding-right: 46px;
    border-bottom: 2px solid #3f3548;
}

.apple {
    margin-right: 36px;
}

.menu-item {
    margin-right: 39px;
    white-space: nowrap;
}

.menu-app {
    font-weight: 700;
    letter-spacing: 1.5px;
}

.status {
    margin-left: auto;
    display: flex;
    align-items: center;
    white-space: nowrap;
}

.st-bt { margin-right: 28px; }
.st-wifi { margin-right: 20px; }
.st-vol { margin-right: 20px; }
.st-pct { font-size: 26px; margin-right: 10px; }
.st-bat { margin-right: 38px; }
.st-date { margin-right: 29px; }
.st-time { margin-right: 35px; letter-spacing: 1px; }
.st-flag { margin-right: 7px; }
.st-layout { font-size: 17px; color: #e2dde8; margin-right: 20px; }
.st-user { font-weight: 500; margin-right: 32px; letter-spacing: 0.5px; }
.st-search { margin-right: 36px; }
.st-siri { margin-right: 26px; }

.flag-pc {
    font-size: 11px;
    font-weight: 700;
    fill: #fff;
    text-anchor: middle;
    transform: translateX(7px);
}

/* janela */
.window {
    height: 1631px;
    flex: none;
    display: flex;
    flex-direction: column;
    border-radius: 12px;
    overflow: hidden;
}

.tabstrip {
    height: 84px;
    flex: none;
    background-color: #202124;
    border-top: 1px solid #55575b;
    display: flex;
    align-items: flex-end;
}

.lights {
    width: 157px;
    height: 83px;
    padding-left: 26px;
    display: flex;
    align-items: center;
    gap: 16px;
}

.light {
    width: 24px;
    height: 24px;
    border-radius: 50%;
    margin-top: 4px;
}

.red { background-color: #ff5f57; }
.yellow { background-color: #e6bf33; }
.green { background-color: #5cc13a; }

.tab {
    width: 478px;
    height: 68px;
    padding-left: 22px;
    display: flex;
    align-items: center;
    color: #bdc1c6;
    font-size: 26px;
}

.tab::after {
    content: "";
    width: 2px;
    height: 40px;
    background-color: #55575b;
}

.tab-last {
    width: 477px;
    padding-right: 2px;
}

.tab-last::after, .tab-active::after {
    display: none;
}

.tab .fav {
    flex: none;
    margin-right: 18px;
}

.fav-ivia {
    width: 32px;
    margin-right: 17px;
    font-size: 15px;
    font-style: italic;
    color: #1d62b5;
}

.tab-title {
    white-space: nowrap;
}

.tab-fade {
    -webkit-mask-image: linear-gradient(90deg, #000 85%, transparent);
}

.tab-close {
    margin-left: auto;
    font-size: 22px;
    color: #dadce0;
    margin-right: 20px;
}

.tab-active {
    width: 481px;
    color: #e8eaed;
    background-color: #35363a;
    border-radius: 16px 16px 0 0;
    padding: 0 4px 0 24px;
}

.tab-new {
    font-size: 44px;
    font-weight: 300;
    color: #bdc1c6;
    margin-left: 31px;
    height: 68px;
    line-height: 64px;
}

.toolbar {
    height: 72px;
    flex: none;
    background-color: #35363a;
    display: flex;
    align-items: flex-start;
    padding: 8px 0 0 28px;
}

.nav-ic {
    margin-top: 12px;
    margin-right: 32px;
}

.omnibox {
    width: 2063px;
    height: 56px;
    margin-left: -3px;
    background-color: #202124;
    border-radius: 28px;
    display: flex;
    align-items: center;
    padding: 0 20px 0 22px;
    gap: 17px;
    font-size: 30px;
    color: #9aa0a6;
}

.url {
    white-space: nowrap;
    letter-spacing: -0.05px;
}

.url b {
    font-weight: 400;
    color: #e8eaed;
}

.star {
    margin-left: auto;
}

.extensions {
    display: flex;
    align-items: center;
    height: 56px;
    margin-left: 28px;
    gap: 32px;
}

.avatar {
    width: 44px;
    height: 44px;
    margin: 0 -6px;
    border-radius: 50%;
    background-color: #7e57c2;
    color: #e8e0f5;
    font-size: 24px;
    text-align: center;
    line-height: 44px;
}

.kebab {
    margin-left: 12px;
}

.bookmarks {
    height: 64px;
    flex: none;
    background-color: #35363a;
    display: flex;
    align-items: center;
    padding: 0 0 8px 30px;
    color: #e8eaed;
    font-size: 25px;
    white-space: nowrap;
}

.bm {
    display: flex;
    align-items: center;
}

.bm svg {
    margin-right: 18px;
}

.globe {
    width: 30px;
    height: 30px;
}

.folder {
    width: 32px;
    height: 30px;
}

.bm-apps { width: 137px; }
.w-torrentz { width: 307px; }
.w-curso { width: 308px; }
.w-angular { width: 307px; }
.w-ionic { width: 136px; }
.w-analisador { width: 307px; }
.w-spring { width: 249px; }
.w-angular4 { width: 180px; }
.w-jsp { width: 115px; }
.w-apres { width: 308px; }
.w-node { width: 187px; }

.bm-more {
    margin-right: 16px;
}

.bm-sep {
    width: 2px;
    height: 36px;
    background-color: #5f6164;
    margin-right: 19px;
}

.sprites {
    position: absolute;
}

/* aplicacao atras do modal */
.app {
    flex: 1;
    position: relative;
    display: flex;
    flex-direction: column;
    background-color: #a9a9a9;
    min-height: 0;
}

.app-header {
    height: 130px;
    flex: none;
    background-color: #0e0a3c;
    display: flex;
    align-items: center;
    padding: 3px 78px 0 54px;
    color: #a9a9a9;
}

.burger {
    margin-right: 22px;
}

.brand {
    font-size: 40px;
    font-weight: 500;
}

.acct {
    margin-left: auto;
    margin-right: 156px;
    margin-top: -3px;
}

.power {
    margin-top: -64px;
}

.app-body {
    flex: 1;
    display: flex;
    min-height: 0;
    border-bottom: 2px solid #9a9a9a;
}

.sidenav {
    width: 1000px;
    padding-top: 15px;
    padding-left: 2px;
}

.nav-card {
    background-color: #adadad;
    border-top: 2px solid #8c8c8c;
    box-shadow: 0 3px 4px rgba(0, 0, 0, 0.35);
}

.nav-card-open {
    margin-top: 33px;
    height: 353px;
    border-top: none;
    border-radius: 8px 0 0 8px;
}

.nav-row {
    height: 96px;
    display: flex;
    align-items: center;
    border-bottom: 1px solid #a5a5a5;
    font-size: 30px;
    color: #5a5a5a;
}

.nav-card-open .nav-row {
    border-bottom: none;
    height: 126px;
}

.nav-card > .nav-row:nth-child(4) {
    border-bottom: none;
}

.nav-icon {
    flex: none;
    width: 40px;
    margin-left: 50px;
}

.nav-label {
    margin-left: 129px;
}

.nav-label-long {
    margin-left: 80px;
}

.nav-sub {
    display: block;
    height: 95px;
    line-height: 95px;
    padding-left: 79px;
    font-size: 32px;
    color: #1c1c1c;
}

.nav-card-open .nav-sub:first-of-type {
    margin-top: 3px;
}

.panels {
    flex: 1;
    padding: 40px 40px 0 0;
}

.panel, .panel-group {
    background-color: #adadad;
    border-radius: 8px;
    box-shadow: 0 3px 4px rgba(0, 0, 0, 0.35);
}

.panel {
    height: 351px;
    margin-bottom: 33px;
    padding-top: 53px;
}

.panel-group {
    height: 288px;
}

.panel-line {
    height: 96px;
    padding-top: 48px;
    border-bottom: 1px solid #a5a5a5;
}

.panel-line:last-child {
    border-bottom: none;
}

.chev {
    display: block;
    width: 16px;
    height: 16px;
    margin-left: 1776px;
    margin-top: -7px;
    border-right: 4px solid #555;
    border-bottom: 4px solid #555;
    transform: rotate(45deg);
}

.chev-up {
    transform: rotate(225deg);
    margin-top: 2px;
}

.app-footer {
    height: 120px;
    flex: none;
}

/* modal */
.modal {
    position: absolute;
    left: 288px;
    top: 24px;
    width: 2304px;
    height: 1366px;
    background-color: #fff;
    border-radius: 10px;
    box-shadow: 0 0 130px rgba(0, 0, 0, 0.28);
    padding: 48px 48px 0 49px;
}

.viewer-bar {
    height: 68px;
    background-color: #f9f9f9;
    border: 3px solid #e3e3e3;
    display: flex;
    align-items: center;
    padding-left: 4px;
    color: #444;
    font-size: 24px;
}

.viewer-bar > svg {
    flex: none;
}

.pdf-btn {
    height: 50px;
    padding: 0;
    background: none;
    display: flex;
    align-items: center;
    justify-content: center;
    border-radius: 4px;
}

.pdf-toggle {
    width: 64px;
    border: 3px solid #1a3cf0;
}

.pdf-search { margin-left: 7px; }
.pdf-first { margin-left: 28px; }
.pdf-prev { margin-left: 25px; }

.pdf-page {
    width: 80px;
    height: 44px;
    margin-left: 20px;
    border: 2px solid #999;
    border-radius: 4px;
    background-color: #fff;
    font-family: "Liberation Sans", sans-serif;
    font-size: 24px;
    color: #444;
    text-align: right;
    padding-right: 12px;
}

.pdf-of { margin-left: 7px; font-family: "Liberation Sans", sans-serif; }
.pdf-next { margin-left: 23px; }
.pdf-last { margin-left: 24px; }
.pdf-minus { margin-left: 476px; margin-top: 8px; }
.pdf-plus { margin-left: 26px; margin-top: 8px; }

.pdf-zoom {
    width: 240px;
    height: 51px;
    margin-left: 13px;
    border: 2px solid #777;
    border-radius: 4px;
    background-color: #fff;
    display: flex;
    align-items: center;
    justify-content: space-between;
    padding: 0 6px 0 7px;
    font-family: "Liberation Sans", sans-serif;
    font-size: 24px;
    color: #444;
    white-space: nowrap;
}

.pdf-move { margin-left: 420px; }

.pdf-select {
    width: 64px;
    margin-left: 8px;
    border: 2px solid #8a8a8a;
    background-color: #c6c6c6;
}

.pdf-rot { margin-left: 9px; }
.pdf-rotb { margin-left: 13px; }
.pdf-open { margin-left: 26px; }
.pdf-print { margin-left: 27px; }
.pdf-save { margin-left: 27px; }
.pdf-mark { margin-left: 25px; }
.pdf-more { margin-left: 18px; }

.viewer {
    height: 1201px;
    overflow: hidden;
    padding: 18px 0 0 107px;
    font-family: "Liberation Sans", sans-serif;
    color: #000;
}

.sheet {
    width: 2001px;
    height: 1400px;
    box-shadow: 0 0 14px 4px #7a7a7a;
}

.scan {
    width: 2027px;
    height: 1400px;
    background-color: #f9f9f9;
}

.lab-head {
    height: 231px;
    display: flex;
    padding: 19px 0 0 94px;
}

.logo {
    position: relative;
    width: 464px;
    height: 191px;
    background-color: #22cda8;
    border-radius: 30px 30px 0 30px;
    outline: 5px solid #fff;
    padding: 47px 44px 0 45px;
    color: #fff;
}

.logo-top {
    height: 58px;
    display: flex;
    justify-content: space-between;
    align-items: flex-start;
    border-bottom: 3px solid #eafaf6;
}

.logo-name {
    font-size: 65px;
    font-weight: 700;
    line-height: 50px;
    -webkit-text-stroke: 3px #fff;
    letter-spacing: 6px;
}

.logo-city {
    width: 269px;
    text-align: right;
    font-size: 32px;
    line-height: 40px;
}

.logo-vline {
    position: absolute;
    left: 326px;
    top: 41px;
    width: 3px;
    height: 109px;
    background-color: #eafaf6;
}

.lab-contact {
    margin-left: 828px;
    padding-top: 43px;
    font-family: "DejaVu Sans", sans-serif;
    color: #22cda8;
    white-space: nowrap;
}

.contact-main {
    font-size: 24px;
    line-height: 28px;
    display: flex;
    gap: 14px;
    letter-spacing: 0.4px;
}

.contact-small {
    font-size: 18px;
    line-height: 24px;
    margin-left: 3px;
    letter-spacing: 0.3px;
}

.contact-web {
    font-size: 20px;
    font-weight: 700;
    line-height: 22px;
    margin-left: 5px;
}

.patient {
    height: 253px;
    background-color: #fff;
    border-radius: 80px;
    display: flex;
    padding: 40px 0 0 161px;
    font-size: 29px;
}

.patient-main {
    width: 1004px;
}

.patient-code {
    font-family: "DejaVu Sans Mono", monospace;
    font-weight: 700;
    font-size: 41px;
    letter-spacing: 3.6px;
    line-height: 50px;
}

.patient-name {
    font-size: 38px;
    line-height: 54px;
}

.patient-doctor {
    font-size: 28.8px;
    font-variant: small-caps;
    margin-top: 22px;
    line-height: 42px;
}

.patient-info {
    width: 519px;
    padding-top: 52px;
    font-variant: small-caps;
    line-height: 40px;
}

.patient-phone {
    margin-top: 3px;
}

.patient-sex {
    padding-top: 52px;
    font-size: 30px;
    font-variant: small-caps;
    line-height: 40px;
    white-space: nowrap;
}

.barcode {
    width: 246px;
    height: 80px;
    margin: 8px 0 0 -3px;
    background: repeating-linear-gradient(90deg, #000 0 2px, #fff 2px 4px, #000 4px 7px, #fff 7px 9px, #000 9px 11px, #fff 11px 12px, #000 12px 13px, #fff 13px 16px, #000 16px 20px, #fff 20px 22px, #000 22px 23px, #fff 23px 25px, #000 25px 27px, #fff 27px 30px, #000 30px 31px, #fff 31px 33px, #000 33px 36px, #fff 36px 37px);
}

.col-heads {
    height: 48px;
    padding-left: 98px;
    display: flex;
    align-items: center;
    font-family: "DejaVu Sans", sans-serif;
    font-size: 29.6px;
    font-weight: 700;
    color: #22cda8;
    white-space: nowrap;
}

.col-exam { width: 623px; }
.col-result { width: 382px; }
.col-graph { width: 441px; padding-top: 3px; }

.results {
    height: 900px;
    background-color: #fff;
    border-radius: 80px 80px 0 0;
    padding: 68px 33px 0 114px;
    font-size: 28.2px;
}

.collect {
    height: 41px;
    font-size: 28.4px;
    line-height: 38px;
    border-bottom: 2px solid #888;
}

.exam-title {
    margin: 24px 0 0;
    font-size: 33px;
    line-height: 40px;
}

.exam-material {
    font-size: 19px;
    line-height: 22px;
}

.exam-group {
    font-size: 28.5px;
    font-weight: 700;
    line-height: 26px;
    margin-top: 10px;
}

.exam-row {
    display: grid;
    grid-template-columns: 700px 84px 1fr auto 118px;
    grid-template-rows: 47px;
    grid-auto-rows: 21px;
    align-items: baseline;
    line-height: 34px;
    margin-right: 76px;
}

.exam-first {
    grid-template-columns: 700px 84px 1fr auto 188px;
}

.exam-row b {
    font-size: 32.5px;
    transform: translateY(4px);
}

.exam-row small {
    font-size: 23.5px;
    transform: translateY(5px);
}

.ref, .ref-unit {
    font-size: 23.6px;
    text-align: right;
    transform: translateY(-3px);
}

.exam-row em {
    grid-column: 1 / -1;
    font-style: normal;
    font-size: 19px;
    line-height: 21px;
    text-align: right;
    transform: translateY(-5px);
}

/* dock */
.dock {
    height: 122px;
    width: 2720px;
    flex: none;
    margin: 1px 0 0 80px;
    border-radius: 12px 12px 0 0;
    background: linear-gradient(90deg, #12356a, #18467f 40%, #204a85 70%, #3f4a75 82%, #163a70 95%);
    border-top: 2px solid #2c4d80;
    display: flex;
    align-items: flex-start;
    padding: 15px 0 0 5px;
}

.dock-item {
    position: relative;
    width: 97px;
    height: 105px;
    flex: none;
    display: flex;
    justify-content: center;
}

.dock-item svg {
    width: 78px;
    height: 78px;
}

.has-dot::after {
    content: "";
    position: absolute;
    left: 46px;
    bottom: 5px;
    width: 6px;
    height: 6px;
    border-radius: 50%;
    background-color: #a9c9f0;
}

.badge {
    position: absolute;
    right: 0;
    top: -8px;
    min-width: 34px;
    height: 34px;
    border-radius: 17px;
    background-color: #ec3d3d;
    color: #fff;
    font-size: 20px;
    line-height: 34px;
    text-align: center;
}

.badge-wide {
    padding: 0 3px;
}

.dock-sep {
    width: 1px;
    height: 88px;
    margin: 1px 22px 0;
    background-color: #8c9cb8;
    flex: none;
}

.cal-month {
    font-size: 13px;
    fill: #fff;
    text-anchor: middle;
    font-family: Roboto, sans-serif;
}

.cal-day {
    font-size: 34px;
    fill: #222;
    text-anchor: middle;
    font-family: Roboto, sans-serif;
}

.maps-3d {
    font-size: 13px;
    fill: #444;
    text-anchor: middle;
}

.tv-text {
    font-size: 28px;
    fill: #fff;
    font-family: Roboto, sans-serif;
}
```
